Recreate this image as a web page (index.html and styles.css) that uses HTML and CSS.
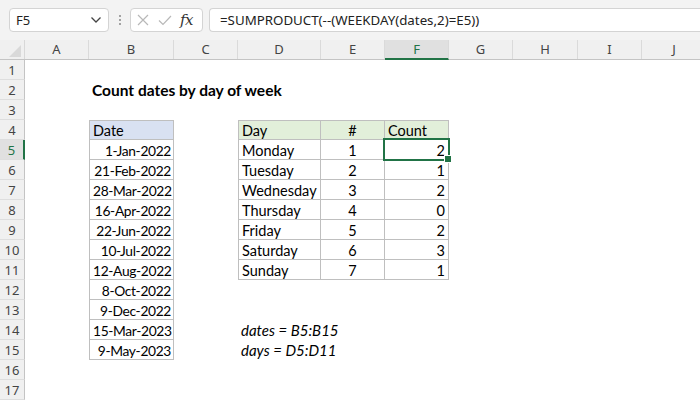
FILE: index.html
```html
<!DOCTYPE html>
<html>
<head>
<meta charset="utf-8">
<link rel="stylesheet" href="styles.css">
</head>
<body>
<div class="toolbar">
  <div class="namebox"><span>F5</span>
    <svg class="chev" width="12" height="8" viewBox="0 0 12 8"><path d="M1.5 1.5 L6 6 L10.5 1.5" fill="none" stroke="#444" stroke-width="1.3"/></svg>
  </div>
  <div class="sep"><svg width="4" height="12" viewBox="0 0 4 12"><circle cx="2" cy="2" r="1" fill="#888"/><circle cx="2" cy="6" r="1" fill="#888"/><circle cx="2" cy="10" r="1" fill="#888"/></svg></div>
  <div class="btns">
    <svg width="12" height="12" viewBox="0 0 12 12"><path d="M1 1 L11 11 M11 1 L1 11" stroke="#b8b8b8" stroke-width="1.2" fill="none"/></svg>
    <svg width="14" height="11" viewBox="0 0 14 11"><path d="M1 5.5 L5 9.5 L13 1" stroke="#b8b8b8" stroke-width="1.2" fill="none"/></svg>
    <span class="fx">fx</span>
  </div>
  <div class="formula">=SUMPRODUCT(--(WEEKDAY(dates,2)=E5))</div>
</div>

<div class="colheads">
  <div class="corner"><svg width="25" height="20" viewBox="0 0 25 20"><path d="M21 5 L21 17 L9 17 Z" fill="#d9d9d9"/></svg></div>
  <div class="ch wa">A</div>
  <div class="ch wb">B</div>
  <div class="ch wc">C</div>
  <div class="ch wd">D</div>
  <div class="ch we">E</div>
  <div class="ch wf active">F</div>
  <div class="ch wg">G</div>
  <div class="ch wh">H</div>
  <div class="ch wi">I</div>
  <div class="ch wj">J</div>
</div>

<div class="sheet">
  <div class="row"><div class="rh">1</div></div>
  <div class="row"><div class="rh">2</div><div class="cell wa"></div><div class="cell wb title">Count dates by day of week</div></div>
  <div class="row"><div class="rh">3</div></div>
  <div class="row"><div class="rh">4</div><div class="cell wa"></div>
    <div class="cell wb bx top hb">Date</div><div class="cell wc"></div>
    <div class="cell wd bx bl top hg">Day</div><div class="cell we bx top hg ctr">#</div><div class="cell wf bx top hg">Count</div></div>
  <div class="row"><div class="rh act">5</div><div class="cell wa"></div>
    <div class="cell wb bx r dt">1-Jan-2022</div><div class="cell wc"></div>
    <div class="cell wd bx bl">Monday</div><div class="cell we bx ctr">1</div><div class="cell wf bx r sel">2</div></div>
  <div class="row"><div class="rh">6</div><div class="cell wa"></div>
    <div class="cell wb bx r dt">21-Feb-2022</div><div class="cell wc"></div>
    <div class="cell wd bx bl">Tuesday</div><div class="cell we bx ctr">2</div><div class="cell wf bx r">1</div></div>
  <div class="row"><div class="rh">7</div><div class="cell wa"></div>
    <div class="cell wb bx r dt">28-Mar-2022</div><div class="cell wc"></div>
    <div class="cell wd bx bl">Wednesday</div><div class="cell we bx ctr">3</div><div class="cell wf bx r">2</div></div>
  <div class="row"><div class="rh">8</div><div class="cell wa"></div>
    <div class="cell wb bx r dt">16-Apr-2022</div><div class="cell wc"></div>
    <div class="cell wd bx bl">Thursday</div><div class="cell we bx ctr">4</div><div class="cell wf bx r">0</div></div>
  <div class="row"><div class="rh">9</div><div class="cell wa"></div>
    <div class="cell wb bx r dt">22-Jun-2022</div><div class="cell wc"></div>
    <div class="cell wd bx bl">Friday</div><div class="cell we bx ctr">5</div><div class="cell wf bx r">2</div></div>
  <div class="row"><div class="rh">10</div><div class="cell wa"></div>
    <div class="cell wb bx r dt">10-Jul-2022</div><div class="cell wc"></div>
    <div class="cell wd bx bl">Saturday</div><div class="cell we bx ctr">6</div><div class="cell wf bx r">3</div></div>
  <div class="row"><div class="rh">11</div><div class="cell wa"></div>
    <div class="cell wb bx r dt">12-Aug-2022</div><div class="cell wc"></div>
    <div class="cell wd bx bl">Sunday</div><div class="cell we bx ctr">7</div><div class="cell wf bx r">1</div></div>
  <div class="row"><div class="rh">12</div><div class="cell wa"></div>
    <div class="cell wb bx r dt">8-Oct-2022</div></div>
  <div class="row"><div class="rh">13</div><div class="cell wa"></div>
    <div class="cell wb bx r dt">9-Dec-2022</div></div>
  <div class="row"><div class="rh">14</div><div class="cell wa"></div>
    <div class="cell wb bx r dt">15-Mar-2023</div><div class="cell wc"></div>
    <div class="cell wd note">dates = B5:B15</div></div>
  <div class="row"><div class="rh">15</div><div class="cell wa"></div>
    <div class="cell wb bx r dt">9-May-2023</div><div class="cell wc"></div>
    <div class="cell wd note">days = D5:D11</div></div>
  <div class="row"><div class="rh">16</div></div>
  <div class="row"><div class="rh">17</div></div>
</div>
</body>
</html>
```

FILE: styles.css
```css
* { box-sizing: border-box; }
body {
  margin: 0;
  background: #fff;
  font-family: "Noto Sans", "Open Sans", sans-serif;
  overflow: hidden;
  width: 700px;
  height: 400px;
}
.toolbar {
  height: 40px;
  background: #f3f3f3;
  display: flex;
  align-items: flex-start;
  padding: 8px 0 0 9px;
  overflow: hidden;
}
.namebox {
  flex: 0 0 100px;
  height: 24px;
  background: #fff;
  border: 1px solid #d4d4d4;
  border-radius: 4px;
  display: flex;
  align-items: center;
  justify-content: space-between;
  padding: 0 6px 0 6px;
  font-size: 13px;
  color: #222;
}
.sep {
  flex: 0 0 21px;
  height: 24px;
  display: flex;
  align-items: center;
  justify-content: center;
}
.btns {
  flex: 0 0 73px;
  height: 24px;
  background: #fff;
  border: 1px solid #d4d4d4;
  border-radius: 4px;
  display: flex;
  align-items: center;
  gap: 9px;
  padding-left: 6px;
}
.fx {
  font-family: "DejaVu Serif", "Liberation Serif", serif;
  font-style: italic;
  font-size: 15px;
  color: #333;
  margin-left: -1px;
  letter-spacing: -0.5px;
}
.formula {
  flex: 0 0 520px;
  margin-left: 6px;
  height: 24px;
  background: #fff;
  border: 1px solid #d4d4d4;
  border-right: none;
  border-radius: 4px 0 0 4px;
  padding-left: 10px;
  font-size: 13.3px;
  line-height: 22px;
  color: #222;
  white-space: nowrap;
}
.colheads {
  display: flex;
  height: 20px;
  background: #f0f0f0;
  border-bottom: 1px solid #c4c4c4;
}
.corner { flex: 0 0 25px; height: 19px; border-right: 1px solid #d8d8d8; overflow: hidden; }
.corner svg { display: block; }
.ch {
  min-width: 0;
  height: 19px;
  border-right: 1px solid #dadada;
  text-align: center;
  font-size: 13px;
  line-height: 19px;
  color: #444;
}
.ch.active {
  background: #e0e0e0;
  color: #217346;
  border-bottom: 2px solid #217346;
  height: 20px;
  line-height: 18px;
}
.wa { flex: 0 0 64px; }
.wb { flex: 0 0 85px; }
.wc { flex: 0 0 64px; }
.wd { flex: 0 0 83px; }
.we { flex: 0 0 64px; }
.wf { flex: 0 0 64px; }
.wg { flex: 0 0 64px; }
.wh { flex: 0 0 65px; }
.wi { flex: 0 0 64px; }
.wj { flex: 0 0 65px; }

.sheet { display: flex; flex-direction: column; }
.row { display: flex; height: 20px; }
.rh {
  flex: 0 0 25px;
  height: 20px;
  background: #f0f0f0;
  border-right: 1px solid #c4c4c4;
  border-bottom: 1px solid #dedede;
  text-align: center;
  font-size: 13px;
  line-height: 20px;
  color: #444;
}
.rh.act {
  background: #e0e0e0;
  color: #217346;
  border-right: 2px solid #217346;
}
.cell {
  min-width: 0;
  height: 20px;
  padding: 0 3px;
  font-family: "Lato", "Open Sans", sans-serif;
  font-size: 14.5px;
  line-height: 21px;
  color: #000;
  white-space: nowrap;
}
.dt { font-size: 13.8px; letter-spacing: -0.35px; padding-right: 2px; }
.title { font-weight: bold; font-size: 15.5px; overflow: visible; }
.bx { border-right: 1px solid #bfbfbf; border-bottom: 1px solid #bfbfbf; }
.wb.bx, .bl { border-left: 1px solid #bfbfbf; }
.top { border-top: 1px solid #bfbfbf; line-height: 19px; }
.hb { background: #d9e1f2; }
.hg { background: #e2efda; }
.r { text-align: right; }
.ctr { text-align: center; }
.note { font-style: italic; font-size: 15px; overflow: visible; padding-left: 3px; }
.sel { position: relative; }
.sel::after {
  content: "";
  position: absolute;
  left: -2px;
  top: -2px;
  right: -2px;
  bottom: -2px;
  border: 2px solid #217346;
}
.sel::before {
  content: "";
  position: absolute;
  right: -4px;
  bottom: -4px;
  width: 6px;
  height: 6px;
  background: #217346;
  border: 1px solid #fff;
  z-index: 2;
}
```
